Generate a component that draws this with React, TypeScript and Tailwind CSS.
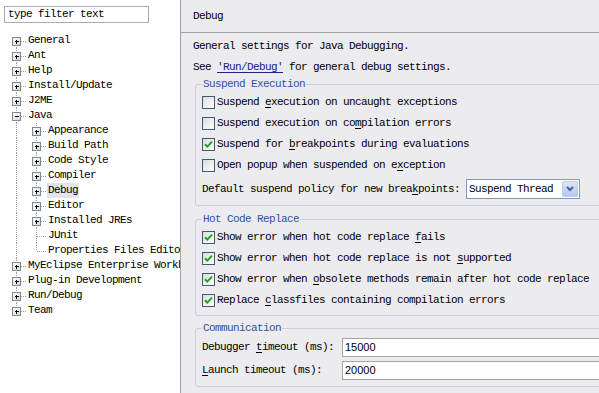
import React from "react";

const mono = "font-['Liberation_Mono',monospace] text-[11px] tracking-[-0.6px] text-black";

type Node = { l: 1 | 2; t: string; k: "plus" | "minus" | "leaf"; sel?: boolean };

const tree: Node[] = [
  { l: 1, t: "General", k: "plus" },
  { l: 1, t: "Ant", k: "plus" },
  { l: 1, t: "Help", k: "plus" },
  { l: 1, t: "Install/Update", k: "plus" },
  { l: 1, t: "J2ME", k: "plus" },
  { l: 1, t: "Java", k: "minus" },
  { l: 2, t: "Appearance", k: "plus" },
  { l: 2, t: "Build Path", k: "plus" },
  { l: 2, t: "Code Style", k: "plus" },
  { l: 2, t: "Compiler", k: "plus" },
  { l: 2, t: "Debug", k: "plus", sel: true },
  { l: 2, t: "Editor", k: "plus" },
  { l: 2, t: "Installed JREs", k: "plus" },
  { l: 2, t: "JUnit", k: "leaf" },
  { l: 2, t: "Properties Files Editor", k: "leaf" },
  { l: 1, t: "MyEclipse Enterprise Workbench", k: "plus" },
  { l: 1, t: "Plug-in Development", k: "plus" },
  { l: 1, t: "Run/Debug", k: "plus" },
  { l: 1, t: "Team", k: "plus" },
];

function Cell({
  kind,
  top,
  bottom,
  horiz,
}: {
  kind: "plus" | "minus" | "leaf" | "none";
  top: boolean;
  bottom: boolean;
  horiz: boolean;
}) {
  const dot = { stroke: "#A0A0A0", strokeWidth: 1, strokeDasharray: "1 1", shapeRendering: "crispEdges" as const };
  return (
    <svg width="20" height="15" viewBox="0 0 20 15" className="shrink-0">
      <defs>
        <linearGradient id="bx" x1="0" y1="0" x2="1" y2="1">
          <stop offset="0" stopColor="#FFFFFF" />
          <stop offset="1" stopColor="#D8D6CC" />
        </linearGradient>
      </defs>
      {top && <line x1="10.5" y1="0" x2="10.5" y2="8" {...dot} />}
      {bottom && <line x1="10.5" y1="8" x2="10.5" y2="15" {...dot} />}
      {horiz && <line x1="11" y1="8.5" x2="20" y2="8.5" {...dot} />}
      {(kind === "plus" || kind === "minus") && (
        <g shapeRendering="crispEdges">
          <rect x="6.5" y="4.5" width="8" height="8" fill="url(#bx)" stroke="#7A8A99" />
          <line x1="8.5" y1="8.5" x2="12.5" y2="8.5" stroke="#000" />
          {kind === "plus" && <line x1="10.5" y1="6.5" x2="10.5" y2="10.5" stroke="#000" />}
        </g>
      )}
    </svg>
  );
}

function Tree() {
  const n = tree.length;
  return (
    <div className="mt-[10px] flex flex-col">
      {tree.map((node, i) => {
        const isFirst = i === 0;
        const isLast = i === n - 1;
        const isLastChild = node.l === 2 && (i + 1 >= n || tree[i + 1].l !== 2);
        return (
          <div key={i} className="flex h-[15px] items-center whitespace-nowrap">
            <div className="w-[6px] shrink-0" />
            {node.l === 1 ? (
              <Cell kind={node.k} top={!isFirst} bottom={!isLast} horiz />
            ) : (
              <>
                <Cell kind="none" top bottom horiz={false} />
                <Cell kind={node.k} top bottom={!isLastChild} horiz />
              </>
            )}
            <span
              className={`ml-[1px] h-[15px] px-[1px] leading-[15px] ${node.sel ? "bg-[#E4E4E8]" : ""}`}
            >
              {node.t}
            </span>
          </div>
        );
      })}
    </div>
  );
}

function CB({ checked }: { checked?: boolean }) {
  return (
    <span className="box-border flex h-[13px] w-[13px] shrink-0 items-center justify-center border border-[#3D5A78] bg-gradient-to-br from-[#DCDCD7] to-white">
      {checked && (
        <svg width="11" height="11" viewBox="0 0 11 11">
          <path d="M2 5.2 L4.3 7.6 L9 2.6" stroke="#21A121" strokeWidth="2" fill="none" />
        </svg>
      )}
    </span>
  );
}

function U({ children }: { children: React.ReactNode }) {
  return <span className="underline underline-offset-2">{children}</span>;
}

function CheckRow({ checked, children }: { checked?: boolean; children: React.ReactNode }) {
  return (
    <div className="flex h-[21px] items-center gap-[2px] whitespace-nowrap">
      <CB checked={checked} />
      <span>{children}</span>
    </div>
  );
}

function Group({ title, className, children }: { title: string; className: string; children: React.ReactNode }) {
  return (
    <fieldset className={`ml-[2px] w-[430px] rounded-[3px] border border-[#CFCED6] px-[6px] ${className}`}>
      <legend className="h-[16px] px-[1px] leading-[16px] text-[#2F5597]">{title}</legend>
      {children}
    </fieldset>
  );
}

export default function App() {
  return (
    <div className={`flex h-[393px] w-[599px] overflow-hidden bg-white ${mono}`}>
      <div className="w-[181px] shrink-0 overflow-hidden border-r border-[#A0A0A4] bg-white">
        <div className="ml-[4px] mt-[6px] flex h-[17px] w-[145px] items-center border border-[#A5ACB5] px-[3px] whitespace-nowrap">
          type filter text
        </div>
        <Tree />
      </div>
      <div className="flex min-w-0 flex-1 flex-col overflow-hidden bg-[#ECEBF0]">
        <div className="flex h-[33px] shrink-0 items-center border-b border-[#A0A0A4] pl-[12px]">Debug</div>
        <div className="flex flex-col pl-[12px]">
          <div className="mt-[5px] h-[16px] leading-[16px] whitespace-nowrap">General settings for Java Debugging.</div>
          <div className="mt-[5px] h-[16px] leading-[16px] whitespace-nowrap">
            See <span className="text-[#1A237E] underline underline-offset-2">'Run/Debug'</span> for general debug settings.
          </div>
          <Group title="Suspend Execution" className="mt-[1px] pb-[6px]">
            <CheckRow>
              Suspend <U>e</U>xecution on uncaught exceptions
            </CheckRow>
            <CheckRow>
              Suspend execution on co<U>m</U>pilation errors
            </CheckRow>
            <CheckRow checked>
              Suspend for <U>b</U>reakpoints during evaluations
            </CheckRow>
            <CheckRow>
              Open popup when suspended on e<U>x</U>ception
            </CheckRow>
            <div className="mt-[3px] flex h-[20px] items-center whitespace-nowrap">
              <span>
                Default suspend policy for new brea<U>k</U>points:
              </span>
              <div className="ml-[6px] box-border flex h-[20px] w-[114px] items-center border border-[#7F9DB9] bg-white">
                <span className="flex-1 pl-[2px]">Suspend Thread</span>
                <span className="mr-[1px] flex h-[16px] w-[16px] items-center justify-center rounded-[2px] border border-[#B9CBF3] bg-gradient-to-b from-[#DCE6FD] to-[#B4C8F5]">
                  <svg width="8" height="6" viewBox="0 0 8 6">
                    <path d="M1 1 L4 4 L7 1" stroke="#4D6185" strokeWidth="2" fill="none" />
                  </svg>
                </span>
              </div>
            </div>
          </Group>
          <Group title="Hot Code Replace" className="mt-[5px] pb-[4px]">
            <CheckRow checked>
              Show error when hot code replace <U>f</U>ails
            </CheckRow>
            <CheckRow checked>
              Show error when hot code replace is not <U>s</U>upported
            </CheckRow>
            <CheckRow checked>
              Show error when <U>o</U>bsolete methods remain after hot code replace
            </CheckRow>
            <CheckRow checked>
              Replace <U>c</U>lassfiles containing compilation errors
            </CheckRow>
          </Group>
          <Group title="Communication" className="mt-[4px] pb-[6px]">
            <div className="mt-[2px] flex h-[19px] items-center whitespace-nowrap">
              <span className="w-[140px] shrink-0">
                Debugger <U>t</U>imeout (ms):
              </span>
              <div className="box-border flex h-[19px] w-[300px] items-center border border-[#A5A5A5] bg-white pl-[2px] font-['Liberation_Sans',sans-serif] text-[11px] tracking-normal">
                15000
              </div>
            </div>
            <div className="mt-[4px] flex h-[19px] items-center whitespace-nowrap">
              <span className="w-[140px] shrink-0">
                <U>L</U>aunch timeout (ms):
              </span>
              <div className="box-border flex h-[19px] w-[300px] items-center border border-[#A5A5A5] bg-white pl-[2px] font-['Liberation_Sans',sans-serif] text-[11px] tracking-normal">
                20000
              </div>
            </div>
          </Group>
        </div>
      </div>
    </div>
  );
}
